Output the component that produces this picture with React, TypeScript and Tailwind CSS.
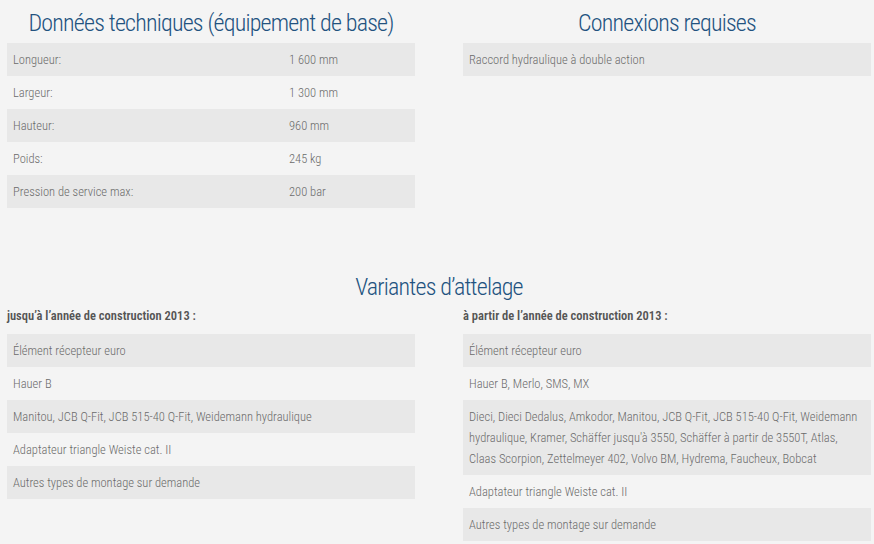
const tech: [string, string][] = [
  ["Longueur:", "1 600 mm"],
  ["Largeur:", "1 300 mm"],
  ["Hauteur:", "960 mm"],
  ["Poids:", "245 kg"],
  ["Pression de service max:", "200 bar"],
];

const left = [
  "Élément récepteur euro",
  "Hauer B",
  "Manitou, JCB Q-Fit, JCB 515-40 Q-Fit, Weidemann hydraulique",
  "Adaptateur triangle Weiste cat. II",
  "Autres types de montage sur demande",
];

const right = [
  "Élément récepteur euro",
  "Hauer B, Merlo, SMS, MX",
  "Dieci, Dieci Dedalus, Amkodor, Manitou, JCB Q-Fit, JCB 515-40 Q-Fit, Weidemann hydraulique, Kramer, Schäffer jusqu'à 3550, Schäffer à partir de 3550T, Atlas, Claas Scorpion, Zettelmeyer 402, Volvo BM, Hydrema, Faucheux, Bobcat",
  "Adaptateur triangle Weiste cat. II",
  "Autres types de montage sur demande",
];

function Title({ children }: { children: React.ReactNode }) {
  return (
    <h2 className="text-center text-[24px] leading-[30px] font-light text-[#22527f] font-stretch-[75%] tracking-[-0.8px] whitespace-nowrap">
      {children}
    </h2>
  );
}

function List({ items }: { items: string[] }) {
  return (
    <div className="flex flex-col">
      {items.map((t, i) => (
        <div
          key={i}
          className={`px-[6px] py-[6px] leading-[21px] ${i % 2 === 0 ? "bg-[#e8e8e8]" : ""}`}
        >
          {t}
        </div>
      ))}
    </div>
  );
}

export default function App() {
  return (
    <div className="w-[874px] h-[544px] overflow-hidden bg-[#f4f4f4] pl-[7px] pr-[3px] text-[12.5px] font-[350] text-[#6b6b6b] font-['Roboto',sans-serif] font-stretch-[75%]">
      <div className="grid grid-cols-[408px_408px] gap-x-[48px]">
        <div>
          <div className="pt-[8px] pb-[5px]">
            <Title>Données techniques (équipement de base)</Title>
          </div>
          <div className="flex flex-col">
            {tech.map(([k, v], i) => (
              <div
                key={k}
                className={`flex px-[6px] py-[6px] leading-[21px] ${i % 2 === 0 ? "bg-[#e8e8e8]" : ""}`}
              >
                <div className="w-[276px]">{k}</div>
                <div>{v}</div>
              </div>
            ))}
          </div>
        </div>
        <div>
          <div className="pt-[8px] pb-[5px]">
            <Title>Connexions requises</Title>
          </div>
          <List items={["Raccord hydraulique à double action"]} />
        </div>
      </div>

      <div className="pt-[64px] w-[864px]">
        <Title>Variantes d’attelage</Title>
      </div>

      <div className="grid grid-cols-[408px_408px] gap-x-[48px]">
        <div>
          <div className="font-semibold text-[#555] leading-[21px] pt-[3px] pb-[8px]">
            jusqu’à l’année de construction 2013 :
          </div>
          <List items={left} />
        </div>
        <div>
          <div className="font-semibold text-[#555] leading-[21px] pt-[3px] pb-[8px]">
            à partir de l’année de construction 2013 :
          </div>
          <List items={right} />
        </div>
      </div>
    </div>
  );
}
